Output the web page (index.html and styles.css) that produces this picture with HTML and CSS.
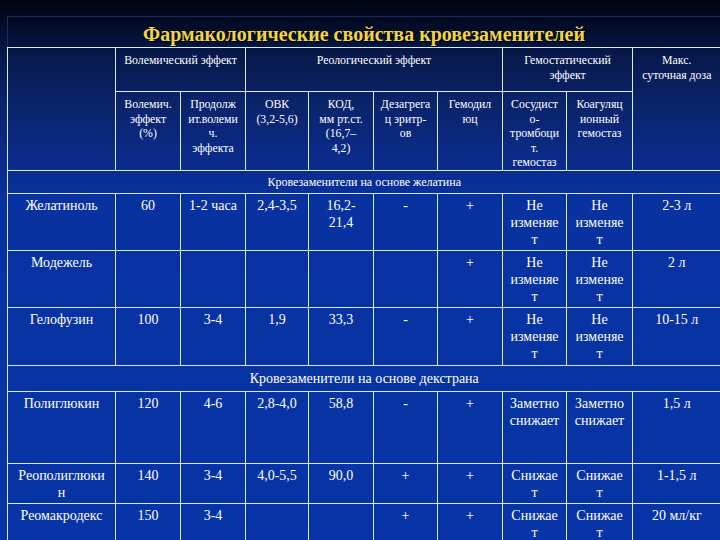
FILE: index.html
```html
<!DOCTYPE html>
<html lang="ru">
<head>
<meta charset="utf-8">
<title>Фармакологические свойства кровезаменителей</title>
<link rel="stylesheet" href="styles.css">
</head>
<body>
<div class="slide">
  <div class="title">Фармакологические свойства кровезаменителей</div>
  <table class="grid">
    <colgroup>
      <col class="c0"><col class="c1"><col class="c2"><col class="c3"><col class="c4">
      <col class="c5"><col class="c6"><col class="c7"><col class="c8"><col class="c9">
    </colgroup>
    <tr class="h1">
      <td class="hd" rowspan="2"></td>
      <td class="hd" colspan="2">Волемический эффект</td>
      <td class="hd" colspan="4">Реологический эффект</td>
      <td class="hd" colspan="2">Гемостатический<br>эффект</td>
      <td class="hd" rowspan="2">Макс.<br>суточная доза</td>
    </tr>
    <tr class="h2">
      <td class="hd">Волемич.<br>эффект<br>(%)</td>
      <td class="hd">Продолж<br>ит.волеми<br>ч.<br>эффекта</td>
      <td class="hd">ОВК<br>(3,2-5,6)</td>
      <td class="hd">КОД,<br>мм рт.ст.<br>(16,7–<br>4,2)</td>
      <td class="hd">Дезагрега<br>ц эритр-<br>ов</td>
      <td class="hd">Гемодил<br>юц</td>
      <td class="hd">Сосудист<br>о-<br>тромбоци<br>т.<br>гемостаз</td>
      <td class="hd">Коагуляц<br>ионный<br>гемостаз</td>
    </tr>
    <tr class="g1">
      <td class="group small" colspan="10">Кровезаменители на основе желатина</td>
    </tr>
    <tr class="r57">
      <td>Желатиноль</td><td>60</td><td>1-2 часа</td><td>2,4-3,5</td><td>16,2-<br>21,4</td>
      <td>-</td><td>+</td><td>Не<br>изменяе<br>т</td><td>Не<br>изменяе<br>т</td><td>2-3 л</td>
    </tr>
    <tr class="r57">
      <td>Модежель</td><td></td><td></td><td></td><td></td>
      <td></td><td>+</td><td>Не<br>изменяе<br>т</td><td>Не<br>изменяе<br>т</td><td>2 л</td>
    </tr>
    <tr class="r58">
      <td>Гелофузин</td><td>100</td><td>3-4</td><td>1,9</td><td>33,3</td>
      <td>-</td><td>+</td><td>Не<br>изменяе<br>т</td><td>Не<br>изменяе<br>т</td><td>10-15 л</td>
    </tr>
    <tr class="g2">
      <td class="group" colspan="10">Кровезаменители на основе декстрана</td>
    </tr>
    <tr class="r72">
      <td>Полиглюкин</td><td>120</td><td>4-6</td><td>2,8-4,0</td><td>58,8</td>
      <td>-</td><td>+</td><td>Заметно<br>снижает</td><td>Заметно<br>снижает</td><td>1,5 л</td>
    </tr>
    <tr class="r40">
      <td>Реополиглюки<br>н</td><td>140</td><td>3-4</td><td>4,0-5,5</td><td>90,0</td>
      <td>+</td><td>+</td><td>Снижае<br>т</td><td>Снижае<br>т</td><td>1-1,5 л</td>
    </tr>
    <tr class="r40">
      <td>Реомакродекс</td><td>150</td><td>3-4</td><td></td><td></td>
      <td>+</td><td>+</td><td>Снижае<br>т</td><td>Снижае<br>т</td><td>20 мл/кг</td>
    </tr>
  </table>
</div>
</body>
</html>
```

FILE: styles.css
```css
html, body {
  margin: 0;
  padding: 0;
}
body {
  width: 720px;
  height: 540px;
  overflow: hidden;
  background: linear-gradient(180deg, #00040e 0%, #020b24 4%, #07184a 10%, #0a2266 18%, #0a2a85 28%, #0832a0 38%, #0734a6 100%);
  font-family: "Liberation Serif", "DejaVu Serif", serif;
  color: #ffffff;
}
.slide {
  padding: 16px 0 0 7px;
}
.title {
  height: 31px;
  border-top: 1px solid #1b2c58;
  border-left: 1px solid #1b2c58;
  box-sizing: border-box;
  text-align: center;
  font-weight: bold;
  font-size: 20px;
  line-height: 34px;
  color: #f2d448;
  text-shadow: 1px 1px 1px #000000;
}
.grid {
  border-collapse: collapse;
  table-layout: fixed;
  width: 713px;
}
.c0 { width: 108px; }
.c1 { width: 65px; }
.c2 { width: 65px; }
.c3 { width: 63px; }
.c4 { width: 65px; }
.c5 { width: 64px; }
.c6 { width: 65px; }
.c7 { width: 64px; }
.c8 { width: 66px; }
.c9 { width: 88px; }
.grid td {
  border: 1px solid #d8ecf6;
  vertical-align: top;
  text-align: center;
  padding: 3px 0 0 0;
  font-size: 14px;
  line-height: 17px;
  white-space: nowrap;
  overflow: visible;
}
.grid tr td:last-child {
  border-right: none;
}
.grid td.hd {
  font-size: 11.8px;
  line-height: 14.5px;
  padding-top: 5px;
}
.h1 td { height: 38px; }
.h2 td { height: 73px; }
.g1 td { height: 20px; }
.g2 td { height: 22px; }
.grid td.group {
  padding: 3px 0 0 0;
  line-height: 19px;
}
.grid td.group.small {
  font-size: 12px;
  padding-top: 2px;
}
.r57 td { height: 53px; }
.r58 td { height: 54px; }
.r72 td { height: 68px; }
.r40 td { height: 36px; }
```
